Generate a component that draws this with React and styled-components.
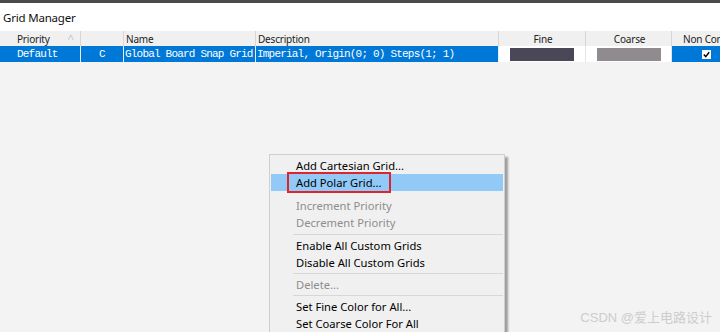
import React from 'react'
import styled, { createGlobalStyle } from 'styled-components'

const Global = createGlobalStyle`
  html, body { margin: 0; padding: 0; }
  body {
    width: 720px;
    height: 332px;
    overflow: hidden;
    background: #f3f3f3;
    font-family: "Noto Sans", "Noto Sans CJK SC", sans-serif;
  }
`

const Window = styled.div`
  width: 720px;
  height: 332px;
  display: flex;
  flex-direction: column;
  position: relative;
  overflow: hidden;
  background: #f3f3f3;
`

const TopEdge = styled.div`
  height: 3px;
  background: #4b4b4b;
`

const Title = styled.div`
  height: 28px;
  background: #fff;
  display: flex;
  align-items: center;
  padding-left: 3px;
  font-size: 11.5px;
  letter-spacing: -0.2px;
  color: #111;
`

const Table = styled.div`
  display: grid;
  grid-template-columns: 81px 43px 132px 243px 87px 86px 80px;
  width: 752px;
`

const HeadCell = styled.div`
  height: 15px;
  background: #f0f0f0;
  border-right: 1px solid #d6d6d6;
  font-size: 10px;
  letter-spacing: -0.2px;
  color: #222;
  display: flex;
  align-items: center;
  justify-content: ${p => (p.$center ? 'center' : 'flex-start')};
  padding-left: ${p => p.$pad || 2}px;
  position: relative;
  white-space: nowrap;
  overflow: hidden;
`

const SortMark = styled.span`
  position: absolute;
  right: 6px;
  top: 1px;
  font-size: 7px;
  color: #a8a8a8;
`

const Cell = styled.div`
  height: 16px;
  background: ${p => (p.$white ? '#fff' : '#0078d7')};
  border-right: 1px solid ${p => (p.$white ? '#e6e6e6' : '#e9eef4')};
  color: #fff;
  font-family: "Liberation Mono", monospace;
  font-size: 11px;
  letter-spacing: -0.8px;
  display: flex;
  align-items: center;
  justify-content: ${p => (p.$center ? 'center' : 'flex-start')};
  padding-left: ${p => p.$pad || 0}px;
  white-space: nowrap;
  overflow: hidden;
`

const Swatch = styled.div`
  width: 64px;
  height: 13px;
  background: ${p => p.$color};
  margin-left: 11px;
`

const Check = styled.div`
  width: 9px;
  height: 9px;
  background: #fff;
  margin-left: 30px;
  display: flex;
  align-items: center;
  justify-content: center;
`

const Menu = styled.div`
  position: absolute;
  left: 269px;
  top: 154px;
  width: 232px;
  padding: 2px 1px 0;
  background: #f0f0f0;
  border: 1px solid #cfcfcf;
  box-shadow: 3px 3px 2px rgba(0, 0, 0, 0.35);
  display: flex;
  flex-direction: column;
`

const Item = styled.div`
  height: 17px;
  display: flex;
  align-items: center;
  padding-left: 25px;
  font-size: 11.2px;
  color: ${p => (p.$disabled ? '#8d8d8d' : '#000')};
  background: ${p => (p.$active ? '#91c9f7' : 'transparent')};
  white-space: nowrap;
`

const Marked = styled.span`
  outline: 2px solid #e0242e;
  outline-offset: 0;
  padding: 1px 7px;
  margin-left: -7px;
`

const Sep = styled.div`
  height: ${p => p.$h || 5}px;
  display: flex;
  align-items: center;
  padding-left: 22px;
  &::after {
    content: '';
    flex: 1;
    height: 1px;
    background: ${p => (p.$hidden ? 'transparent' : '#d7d7d7')};
  }
`

const Watermark = styled.div`
  position: absolute;
  right: 8px;
  bottom: 6px;
  font-size: 13px;
  color: #cdcdcd;
  font-family: "Liberation Sans", "Noto Sans CJK SC", sans-serif;
`

const App = () => (
  <Window>
    <Global />
    <TopEdge />
    <Title>Grid Manager</Title>
    <Table>
      <HeadCell $pad={17}>Priority<SortMark>∧</SortMark></HeadCell>
      <HeadCell />
      <HeadCell>Name</HeadCell>
      <HeadCell>Description</HeadCell>
      <HeadCell $center $pad={0}>Fine</HeadCell>
      <HeadCell $center $pad={0}>Coarse</HeadCell>
      <HeadCell $pad={11}>Non Connected</HeadCell>

      <Cell $pad={17}>Default</Cell>
      <Cell $center>C</Cell>
      <Cell $pad={1}>Global Board Snap Grid</Cell>
      <Cell $pad={1}>Imperial, Origin(0; 0) Steps(1; 1)</Cell>
      <Cell $white><Swatch $color="#4a4857" /></Cell>
      <Cell $white><Swatch $color="#8f8b8f" /></Cell>
      <Cell>
        <Check>
          <svg width="7" height="7" viewBox="0 0 7 7">
            <path d="M0.8 3.6 L2.7 5.6 L6.2 1.2" stroke="#000" strokeWidth="1.4" fill="none" />
          </svg>
        </Check>
      </Cell>
    </Table>

    <Menu>
      <Item>Add Cartesian Grid...</Item>
      <Item $active><Marked>Add Polar Grid...</Marked></Item>
      <Sep $h={6} $hidden />
      <Item $disabled>Increment Priority</Item>
      <Item $disabled>Decrement Priority</Item>
      <Sep $h={6} />
      <Item>Enable All Custom Grids</Item>
      <Item>Disable All Custom Grids</Item>
      <Sep $h={5} />
      <Item $disabled>Delete...</Item>
      <Sep $h={5} />
      <Item>Set Fine Color for All...</Item>
      <Item>Set Coarse Color For All</Item>
    </Menu>

    <Watermark>CSDN @爱上电路设计</Watermark>
  </Window>
)

export default App
